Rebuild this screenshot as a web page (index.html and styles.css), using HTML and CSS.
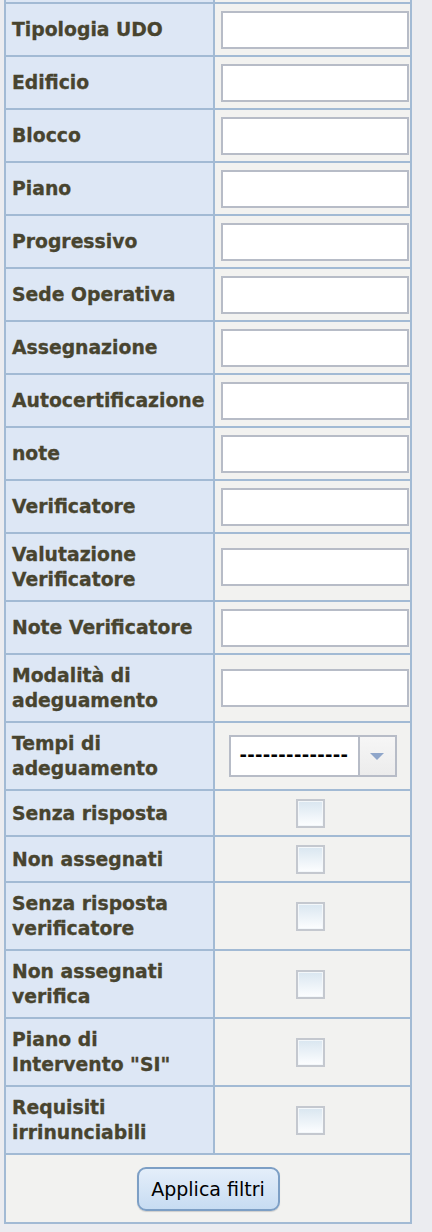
FILE: index.html
```html
<!DOCTYPE html>
<html>
	<head>
		<meta charset="UTF-8">
		<title>Filtri</title>
		<link rel="stylesheet" href="styles.css">
	</head>
	<body>
	<form class="search">
	    <table class="filters">
	        <!-- riga precedente, fuori dalla vista -->
	        <tr class="row">
	            <td class="lbl"></td>
	            <td class="fld"></td>
	        </tr>
	        <tr class="row">
	            <td class="lbl">Tipologia UDO</td>
	            <td class="fld"><input class="txt" type="text"></td>
	        </tr>
	        <tr class="row">
	            <td class="lbl">Edificio</td>
	            <td class="fld"><input class="txt" type="text"></td>
	        </tr>
	        <tr class="row">
	            <td class="lbl">Blocco</td>
	            <td class="fld"><input class="txt" type="text"></td>
	        </tr>
	        <tr class="row">
	            <td class="lbl">Piano</td>
	            <td class="fld"><input class="txt" type="text"></td>
	        </tr>
	        <tr class="row">
	            <td class="lbl">Progressivo</td>
	            <td class="fld"><input class="txt" type="text"></td>
	        </tr>
	        <tr class="row">
	            <td class="lbl">Sede Operativa</td>
	            <td class="fld"><input class="txt" type="text"></td>
	        </tr>
	        <tr class="row">
	            <td class="lbl">Assegnazione</td>
	            <td class="fld"><input class="txt" type="text"></td>
	        </tr>
	        <tr class="row">
	            <td class="lbl">Autocertificazione</td>
	            <td class="fld"><input class="txt" type="text"></td>
	        </tr>
	        <tr class="row">
	            <td class="lbl">note</td>
	            <td class="fld"><input class="txt" type="text"></td>
	        </tr>
	        <tr class="row">
	            <td class="lbl">Verificatore</td>
	            <td class="fld"><input class="txt" type="text"></td>
	        </tr>
	        <tr class="row tall">
	            <td class="lbl">Valutazione Verificatore</td>
	            <td class="fld"><input class="txt" type="text"></td>
	        </tr>
	        <tr class="row">
	            <td class="lbl">Note Verificatore</td>
	            <td class="fld"><input class="txt" type="text"></td>
	        </tr>
	        <tr class="row tall">
	            <td class="lbl">Modalità di adeguamento</td>
	            <td class="fld"><input class="txt" type="text"></td>
	        </tr>
	        <tr class="row tall">
	            <td class="lbl">Tempi di adeguamento</td>
	            <td class="fld center">
	                <span class="sel">
	                    <span class="sel-val">--------------</span>
	                    <span class="sel-btn">
	                        <svg width="14" height="7" viewBox="0 0 14 7"><path d="M0 0H14L7 7Z" fill="#8fa6ca"/></svg>
	                    </span>
	                </span>
	            </td>
	        </tr>
	        <tr class="row short">
	            <td class="lbl">Senza risposta</td>
	            <td class="fld center"><input class="chk" type="checkbox"></td>
	        </tr>
	        <tr class="row short">
	            <td class="lbl">Non assegnati</td>
	            <td class="fld center"><input class="chk" type="checkbox"></td>
	        </tr>
	        <tr class="row tall">
	            <td class="lbl">Senza risposta verificatore</td>
	            <td class="fld center"><input class="chk" type="checkbox"></td>
	        </tr>
	        <tr class="row tall">
	            <td class="lbl">Non assegnati verifica</td>
	            <td class="fld center"><input class="chk" type="checkbox"></td>
	        </tr>
	        <tr class="row tall">
	            <td class="lbl">Piano di Intervento "SI"</td>
	            <td class="fld center"><input class="chk" type="checkbox"></td>
	        </tr>
	        <tr class="row tall">
	            <td class="lbl">Requisiti irrinunciabili</td>
	            <td class="fld center"><input class="chk" type="checkbox"></td>
	        </tr>
	        <tr class="row foot">
	            <td class="fld center" colspan="2"><button class="btn" type="button">Applica filtri</button></td>
	        </tr>
	    </table>
	</form>
	</body>
</html>
```

FILE: styles.css
```css
body{
    margin:0;
    background-color:#ebecf0;
    font-family:"DejaVu Sans", Verdana, sans-serif;
}
.search{
    margin:0;
}
.filters{
    border-collapse:separate;
    border-spacing:2px;
    background-color:#a2bad4;
    table-layout:fixed;
    width:408px;
    margin:-51px 0 0 4px;
}
.filters td{
    padding:0 6px;
    vertical-align:middle;
}
.row td{
    height:51px;
}
.row.tall td{
    height:66px;
}
.row.short td{
    height:44px;
}
.row.foot td{
    height:67px;
}
.lbl{
    width:195px;
    background-color:#dde7f5;
    color:#48442f;
    font-weight:bold;
    font-size:18.8px;
    line-height:25px;
    -webkit-text-stroke:0.3px #48442f;
}
.fld{
    background-color:#f2f2f0;
}
.center{
    text-align:center;
}
.txt{
    display:block;
    box-sizing:border-box;
    width:188px;
    height:38px;
    margin:0;
    padding:0 4px;
    border:2px solid #b7bcc7;
    background-color:#fff;
    font:16px "DejaVu Sans", sans-serif;
}
.sel{
    display:inline-flex;
    box-sizing:border-box;
    width:168px;
    height:42px;
    border:2px solid #b7bcc7;
    background-color:#fff;
    vertical-align:middle;
    text-align:left;
}
.sel-val{
    flex:1;
    padding-left:9px;
    font-size:18px;
    font-weight:bold;
    letter-spacing:0.3px;
    line-height:36px;
    color:#000;
}
.sel-btn{
    display:flex;
    align-items:center;
    justify-content:center;
    width:35px;
    border-left:2px solid #b7bcc7;
    background:linear-gradient(#f6f6f6, #ececec);
}
.chk{
    -webkit-appearance:none;
    appearance:none;
    box-sizing:border-box;
    width:29px;
    height:29px;
    margin:0 4px 0 0;
    border:2px solid #c4c8cf;
    background:linear-gradient(#d9e6f0, #fdfeff);
    box-shadow:inset 0 0 0 1px #f3f7fa;
    vertical-align:middle;
}
.btn{
    box-sizing:border-box;
    width:143px;
    height:44px;
    border:2px solid #7d9fc5;
    border-radius:9px;
    background:linear-gradient(#e4eefa, #c7dcf2);
    box-shadow:0 1px 1px rgba(0,0,0,0.15);
    color:#000;
    font:19px "DejaVu Sans", sans-serif;
    padding:0;
    vertical-align:middle;
}
```
